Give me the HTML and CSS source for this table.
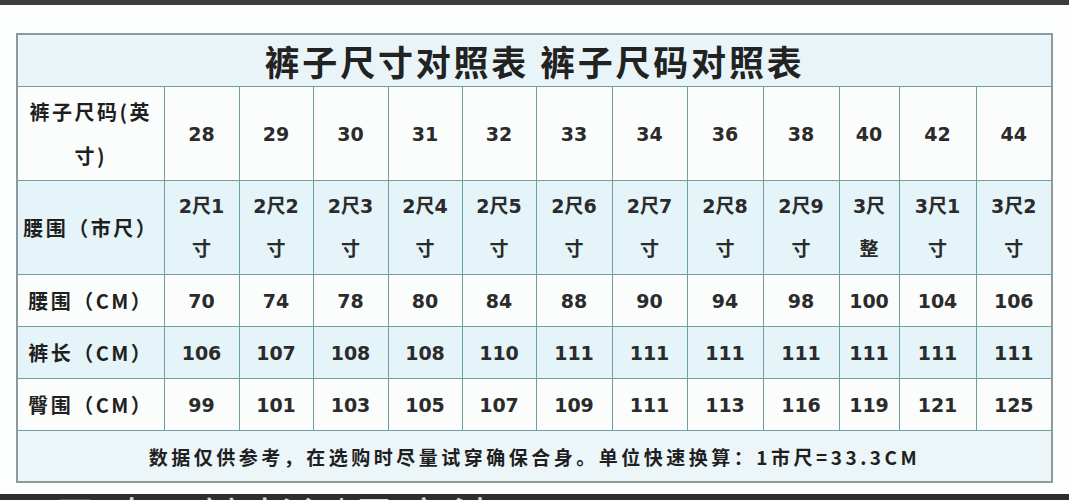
FILE: index.html
```html
<!DOCTYPE html>
<html lang="zh-CN">
<head>
<meta charset="utf-8">
<title>裤子尺寸对照表</title>
<link rel="stylesheet" href="styles.css">
</head>
<body>
<div class="topbar"></div>
<div class="wrap">
  <table class="size-table">
    <colgroup>
      <col class="c-label">
      <col class="c75"><col class="c74"><col class="c75"><col class="c74"><col class="c74"><col class="c76">
      <col class="c75"><col class="c76"><col class="c76"><col class="c60"><col class="c77"><col class="c76">
    </colgroup>
    <tr class="r-title">
      <td colspan="13" class="title">裤子尺寸对照表 裤子尺码对照表</td>
    </tr>
    <tr class="r-tall r-white">
      <td class="label">裤子尺码(英<br>寸)</td>
      <td class="num">28</td><td class="num">29</td><td class="num">30</td><td class="num">31</td>
      <td class="num">32</td><td class="num">33</td><td class="num">34</td><td class="num">36</td>
      <td class="num">38</td><td class="num">40</td><td class="num">42</td><td class="num">44</td>
    </tr>
    <tr class="r-tall r-blue">
      <td class="label">腰围（市尺）</td>
      <td class="mix">2尺1<br>寸</td><td class="mix">2尺2<br>寸</td><td class="mix">2尺3<br>寸</td>
      <td class="mix">2尺4<br>寸</td><td class="mix">2尺5<br>寸</td><td class="mix">2尺6<br>寸</td>
      <td class="mix">2尺7<br>寸</td><td class="mix">2尺8<br>寸</td><td class="mix">2尺9<br>寸</td>
      <td class="mix">3尺<br>整</td><td class="mix">3尺1<br>寸</td><td class="mix">3尺2<br>寸</td>
    </tr>
    <tr class="r-short r-white">
      <td class="label">腰围（CM）</td>
      <td class="num">70</td><td class="num">74</td><td class="num">78</td><td class="num">80</td>
      <td class="num">84</td><td class="num">88</td><td class="num">90</td><td class="num">94</td>
      <td class="num">98</td><td class="num">100</td><td class="num">104</td><td class="num">106</td>
    </tr>
    <tr class="r-short r-blue">
      <td class="label">裤长（CM）</td>
      <td class="num">106</td><td class="num">107</td><td class="num">108</td><td class="num">108</td>
      <td class="num">110</td><td class="num">111</td><td class="num">111</td><td class="num">111</td>
      <td class="num">111</td><td class="num">111</td><td class="num">111</td><td class="num">111</td>
    </tr>
    <tr class="r-short r-white">
      <td class="label">臀围（CM）</td>
      <td class="num">99</td><td class="num">101</td><td class="num">103</td><td class="num">105</td>
      <td class="num">107</td><td class="num">109</td><td class="num">111</td><td class="num">113</td>
      <td class="num">116</td><td class="num">119</td><td class="num">121</td><td class="num">125</td>
    </tr>
    <tr class="r-foot">
      <td colspan="13" class="note">数据仅供参考，在选购时尽量试穿确保合身。单位快速换算：1市尺=33.3CM</td>
    </tr>
  </table>
</div>
<div class="bottombar"><span class="bottom-text">尺寸，裤长测量方法</span></div>
</body>
</html>
```

FILE: styles.css
```css
html, body {
  margin: 0;
  padding: 0;
  background: #fdfefe;
  overflow: hidden;
}
body {
  font-family: "Noto Sans CJK SC", "DejaVu Sans", sans-serif;
  color: #262626;
}
.topbar {
  height: 5px;
  background: #3d3d3d;
}
.wrap {
  padding: 28px 0 0 16px;
}
.size-table {
  border-collapse: collapse;
  table-layout: fixed;
  width: 1036px;
  border: 2px solid #8d9a9c;
}
.c-label { width: 147px; }
.c60 { width: 60px; }
.c74 { width: 74px; }
.c75 { width: 75px; }
.c76 { width: 76px; }
.c77 { width: 77px; }
.size-table td {
  border: 1px solid #6f9fa3;
  padding: 0;
  text-align: center;
  vertical-align: middle;
  white-space: nowrap;
  overflow: hidden;
}
.r-title td { height: 51px; background: #e8f4f8; }
.r-tall td { height: 93px; }
.r-short td { height: 51px; }
.r-foot td { height: 50px; background: #ecf6f9; }
.r-white td { background: #fbfdfd; }
.r-blue td { background: #e4f4f8; }
.title {
  font-size: 35px;
  font-weight: 700;
  letter-spacing: 2.8px;
  color: #222;
  padding-top: 1px;
}
.label {
  font-size: 20px;
  font-weight: 700;
  letter-spacing: 2.5px;
  line-height: 44px;
  color: #1f1f1f;
}
.num {
  font-family: "DejaVu Sans", sans-serif;
  font-size: 19px;
  font-weight: 700;
  color: #2b2b2b;
}
.mix {
  font-family: "DejaVu Sans", "Noto Sans CJK SC", sans-serif;
  font-size: 19px;
  font-weight: 700;
  line-height: 43px;
  color: #2b2b2b;
  padding-top: 4px;
}
.note {
  font-size: 19px;
  font-weight: 700;
  letter-spacing: 3.5px;
  color: #1f1f1f;
}
.bottombar {
  margin-top: 11px;
  height: 40px;
  background: #2e2e2e;
  overflow: hidden;
  padding-left: 52px;
}
.bottom-text {
  display: block;
  font-size: 44px;
  line-height: 44px;
  letter-spacing: 6px;
  color: #d8d8d8;
  padding-top: 0;
}
```
